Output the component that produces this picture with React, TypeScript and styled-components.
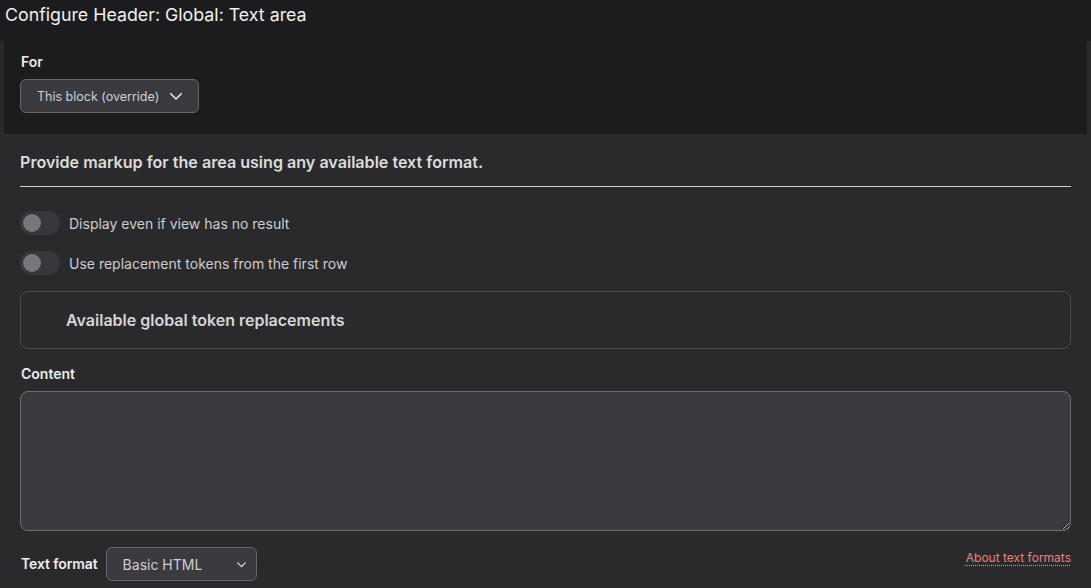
import React from "react";
import styled, { createGlobalStyle } from "styled-components";

const Global = createGlobalStyle`
  html, body { margin: 0; padding: 0; background: #2a2a2c; }
  body { font-family: Inter, "Noto Sans", Arial, sans-serif; color: #e6e6e6; }
  * { box-sizing: border-box; }
`;

const Page = styled.div`
  width: 1091px;
  height: 588px;
  overflow: hidden;
  background: #2a2a2c;
  display: flex;
  flex-direction: column;
`;

const TitleBar = styled.div`
  height: 41px;
  background: #1c1c1e;
  padding: 3px 0 0 5px;
  font-size: 17.8px;
  line-height: 24px;
  color: #f0f0f0;
`;

const ForSection = styled.div`
  margin: 0 4px;
  height: 93px;
  background: #1c1c1e;
  padding: 12px 16px 0;
  display: flex;
  flex-direction: column;
  gap: 8px;
`;

const Label = styled.label`
  font-size: 14px;
  font-weight: 600;
  line-height: 18px;
  color: #ececec;
  padding-left: 1px;
`;

const SelectBox = styled.div<{ $w: number; $fs: number; $pl: number; $pr: number }>`
  width: ${(p) => p.$w}px;
  height: 34px;
  background: #3b3a3f;
  border: 1px solid #65646a;
  border-radius: 6px;
  display: flex;
  align-items: center;
  justify-content: space-between;
  padding: 0 ${(p) => p.$pr}px 0 ${(p) => p.$pl}px;
  font-size: ${(p) => p.$fs}px;
  color: #cfcfd2;
`;

const Body = styled.div`
  padding: 18px 20px 0;
  display: flex;
  flex-direction: column;
`;

const Description = styled.div`
  font-size: 16.1px;
  font-weight: 600;
  line-height: 20px;
  color: #dcdcdc;
  padding-bottom: 14px;
  border-bottom: 1px solid #cfcfcf;
`;

const Toggles = styled.div`
  display: flex;
  flex-direction: column;
  gap: 16px;
  margin-top: 24px;
`;

const ToggleRow = styled.div`
  display: flex;
  align-items: center;
  gap: 9px;
  height: 24px;
`;

const Track = styled.span`
  width: 40px;
  height: 24px;
  border-radius: 12px;
  background: #38373c;
  display: flex;
  align-items: center;
  padding-left: 3px;
`;

const Knob = styled.span`
  width: 18px;
  height: 18px;
  border-radius: 50%;
  background: #77767b;
`;

const ToggleLabel = styled.span`
  font-size: 14px;
  color: #cdcdcf;
`;

const Details = styled.div`
  margin-top: 16px;
  height: 58px;
  border: 1px solid #4a4a4f;
  border-radius: 8px;
  display: flex;
  align-items: center;
  padding-left: 45px;
  font-size: 16px;
  font-weight: 600;
  color: #d6d6d8;
`;

const ContentLabel = styled(Label)`
  margin-top: 16px;
  margin-bottom: 8px;
`;

const TextArea = styled.textarea`
  width: 1051px;
  height: 140px;
  background: #3b3a3f;
  border: 1px solid #6e6d72;
  border-radius: 8px;
  resize: vertical;
  outline: none;
  color: #ddd;
  font-family: inherit;
  display: block;
`;

const FormatRow = styled.div`
  display: flex;
  align-items: flex-start;
  margin-top: 16px;
`;

const FormatLabel = styled(Label)`
  margin-top: 8px;
  margin-right: 8px;
  letter-spacing: -0.1px;
`;

const Spacer = styled.div`
  flex: 1;
`;

const Link = styled.a`
  margin-top: 3px;
  font-size: 12px;
  color: #e8817f;
  text-decoration: underline dotted;
  text-underline-offset: 3px;
`;

const Chevron = ({ size }: { size: number }) => (
  <svg width={size} height={size} viewBox="0 0 24 24" fill="none" stroke="#e6e6e6" strokeWidth={2.2} strokeLinecap="round" strokeLinejoin="round">
    <path d="M5 9l7 7 7-7" />
  </svg>
);

const Toggle = ({ label }: { label: string }) => (
  <ToggleRow>
    <Track>
      <Knob />
    </Track>
    <ToggleLabel>{label}</ToggleLabel>
  </ToggleRow>
);

export default function App() {
  return (
    <Page>
      <Global />
      <TitleBar>Configure Header: Global: Text area</TitleBar>
      <ForSection>
        <Label>For</Label>
        <SelectBox $w={179} $fs={12.5} $pl={16} $pr={13}>
          <span>This block (override)</span>
          <Chevron size={18} />
        </SelectBox>
      </ForSection>
      <Body>
        <Description>Provide markup for the area using any available text format.</Description>
        <Toggles>
          <Toggle label="Display even if view has no result" />
          <Toggle label="Use replacement tokens from the first row" />
        </Toggles>
        <Details>Available global token replacements</Details>
        <ContentLabel>Content</ContentLabel>
        <TextArea />
        <FormatRow>
          <FormatLabel>Text format</FormatLabel>
          <SelectBox $w={151} $fs={14} $pl={16} $pr={8}>
            <span>Basic HTML</span>
            <Chevron size={13} />
          </SelectBox>
          <Spacer />
          <Link href="#">About text formats</Link>
        </FormatRow>
      </Body>
    </Page>
  );
}
